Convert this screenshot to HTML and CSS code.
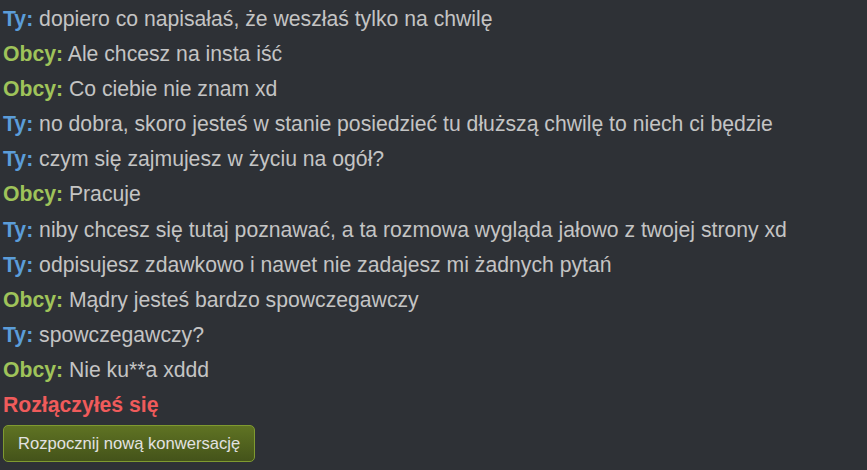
FILE: index.html
```html
<!DOCTYPE html>
<html lang="pl">
<head>
<meta charset="utf-8">
<title>Rozmowa</title>
<link rel="stylesheet" href="styles.css">
</head>
<body>
<div class="log">
  <div class="msg"><span class="me">Ty:</span> dopiero co napisałaś, że weszłaś tylko na chwilę</div>
  <div class="msg"><span class="them">Obcy:</span> Ale chcesz na insta iść</div>
  <div class="msg"><span class="them">Obcy:</span> Co ciebie nie znam xd</div>
  <div class="msg"><span class="me">Ty:</span> no dobra, skoro jesteś w stanie posiedzieć tu dłuższą chwilę to niech ci będzie</div>
  <div class="msg"><span class="me">Ty:</span> czym się zajmujesz w życiu na ogół?</div>
  <div class="msg"><span class="them">Obcy:</span> Pracuje</div>
  <div class="msg"><span class="me">Ty:</span> niby chcesz się tutaj poznawać, a ta rozmowa wygląda jałowo z twojej strony xd</div>
  <div class="msg"><span class="me">Ty:</span> odpisujesz zdawkowo i nawet nie zadajesz mi żadnych pytań</div>
  <div class="msg"><span class="them">Obcy:</span> Mądry jesteś bardzo spowczegawczy</div>
  <div class="msg"><span class="me">Ty:</span> spowczegawczy?</div>
  <div class="msg"><span class="them">Obcy:</span> Nie ku**a xddd</div>
  <div class="msg status">Rozłączyłeś się</div>
  <button class="btn" type="button">Rozpocznij nową konwersację</button>
</div>
</body>
</html>
```
FILE: styles.css
```css
html, body {
  margin: 0;
  padding: 0;
  background: #2e3136;
  height: 100%;
  overflow: hidden;
}
.log {
  padding: 1px 0 0 3px;
  font-family: "Liberation Sans", Arial, sans-serif;
  font-size: 21.2px;
  color: #c4c4c4;
}
.msg {
  padding: 5px 0;
  line-height: 25.1px;
  white-space: nowrap;
}
.me {
  color: #5b9dd9;
  font-weight: bold;
}
.them {
  color: #9fc35a;
  font-weight: bold;
}
.status {
  color: #f05b5b;
  font-weight: bold;
}
.btn {
  display: block;
  margin-top: 3px;
  height: 37px;
  padding: 0 14px;
  font-family: "Liberation Sans", Arial, sans-serif;
  font-size: 16.6px;
  color: #e2e2e2;
  background: linear-gradient(to bottom, #5f7323, #44531a);
  border: 1px solid #7f9a30;
  border-radius: 5px;
}
```
